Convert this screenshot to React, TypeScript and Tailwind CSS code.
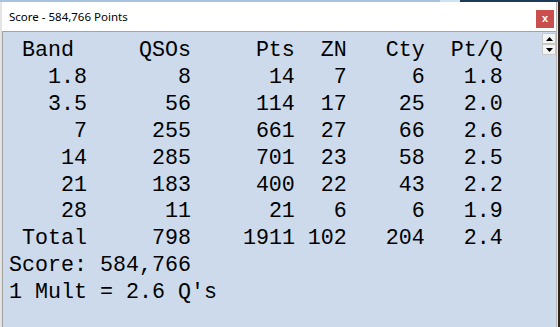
import React from "react";

const rows: string[][] = [
  ["1.8", "8", "14", "7", "6", "1.8"],
  ["3.5", "56", "114", "17", "25", "2.0"],
  ["7", "255", "661", "27", "66", "2.6"],
  ["14", "285", "701", "23", "58", "2.5"],
  ["21", "183", "400", "22", "43", "2.2"],
  ["28", "11", "21", "6", "6", "1.9"],
];

const totals = ["798", "1911", "102", "204", "2.4"];

function Row({ cells, label }: { cells: string[]; label?: string }) {
  return (
    <>
      {label ? (
        <div className="pl-[1ch] text-left">{label}</div>
      ) : (
        <div className="text-right">{cells[0]}</div>
      )}
      {(label ? cells : cells.slice(1)).map((c, i) => (
        <div key={i} className="text-right">
          {c}
        </div>
      ))}
    </>
  );
}

function ScrollButton({ up }: { up?: boolean }) {
  return (
    <div className="w-[14px] h-[11px] bg-[#f3f3f3] border border-[#c8c8c8] flex items-center justify-center">
      <svg width="7" height="4" viewBox="0 0 7 4">
        {up ? <path d="M0 4 L3.5 0 L7 4 Z" fill="#000" /> : <path d="M0 0 L3.5 4 L7 0 Z" fill="#000" />}
      </svg>
    </div>
  );
}

export default function App() {
  return (
    <div className="w-[560px] h-[327px] overflow-hidden flex flex-col bg-[#ccdaeb]">
      {/* desktop strip behind the window */}
      <div className="h-[2px] flex shrink-0">
        <div className="w-[440px] bg-[#a7c2de]" />
        <div className="w-[20px] bg-[#d3e2f0]" />
        <div className="flex-1 bg-[#1d3b57]" />
      </div>

      <div className="flex-1 flex min-h-0">
        <div className="flex-1 flex flex-col min-w-0 border-l-2 border-[#e4e4e4]">
          {/* title bar */}
          <div className="h-[30px] shrink-0 bg-white border-b border-[#a3a3a3] flex items-center justify-between pl-[7px] pr-[2px]">
            <span className="font-['Noto_Sans',sans-serif] text-[11.5px] text-black">
              Score - 584,766 Points
            </span>
            <div className="w-[18px] h-[18px] mt-[4px] bg-[#c94f4f] flex items-center justify-center text-white font-['Liberation_Sans',sans-serif] text-[11px] font-bold leading-none pb-[1px]">
              x
            </div>
          </div>

          {/* body */}
          <div className="flex-1 flex border-l border-[#a0a0a0] min-h-0">
            <div className="flex-1 pl-[6px] pt-[6px] font-['Liberation_Mono',monospace] text-[21.67px] leading-[26.9px] text-black">
              <div className="grid grid-cols-[6ch_8ch_8ch_4ch_6ch_6ch]">
                <Row label="Band" cells={["QSOs", "Pts", "ZN", "Cty", "Pt/Q"]} />
                {rows.map((r, i) => (
                  <Row key={i} cells={r} />
                ))}
                <Row label="Total" cells={totals} />
              </div>
              <div>Score: 584,766</div>
              <div>1 Mult = 2.6 Q's</div>
            </div>
            <div className="w-[14px] pt-[1px] flex flex-col">
              <ScrollButton up />
              <ScrollButton />
            </div>
          </div>
        </div>

        {/* right frame edge */}
        <div className="w-[2px] bg-[#e6e6e6] border-l border-[#b5b5b5]" />
        <div className="w-[2px] bg-[#2e211b]" />
      </div>
    </div>
  );
}
